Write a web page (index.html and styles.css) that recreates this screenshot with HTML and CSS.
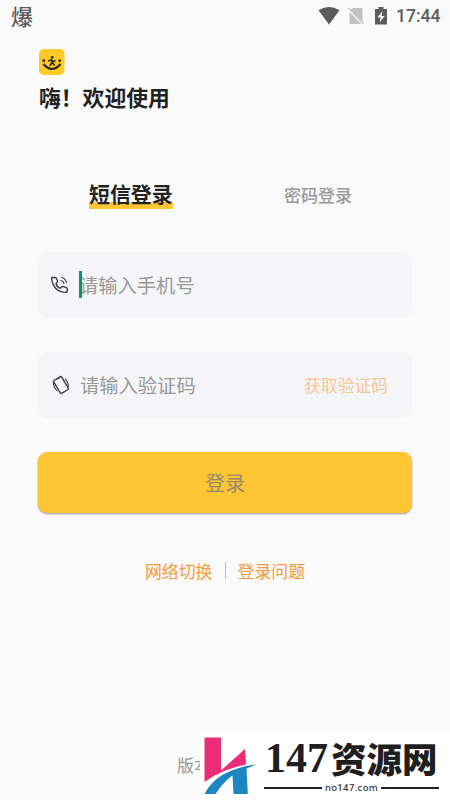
FILE: index.html
```html
<!DOCTYPE html>
<html lang="zh-CN">
<head>
<meta charset="utf-8">
<title>登录</title>
<link rel="stylesheet" href="styles.css">
</head>
<body>
<div class="screen">
  <header class="status">
    <span class="carrier">爆</span>
    <svg class="status-icons" width="76" height="22" viewBox="0 0 76 22">
      <path fill="#5c5c5c" d="M0.5 5.200Q11 -1.200 21.500 5.200L11 19.500Z"/>
      <path fill="#c2c2c2" d="M35 3H44.500V16.500L32.500 4.500ZM31.500 7L43.500 19H31.500Z"/>
      <path d="M30.500 3L45.500 18.500" stroke="#c2c2c2" stroke-width="1.300"/>
      <path fill="#5c5c5c" d="M60.500 2H65.500V4H69V19.500H57V4H60.500Z"/>
      <path fill="#fafafa" d="M64.500 6L59.500 12.500H62.600L61.600 17.500L66.600 11H63.500Z"/>
    </svg>
    <span class="clock">17:44</span>
  </header>
  <main class="content">
    <svg class="logo" width="26" height="26" viewBox="0 0 26 26">
      <rect width="25.500" height="26" rx="5" fill="#fdca27"/>
      <path d="M4.500 15Q13 25 21.500 15" fill="none" stroke="#292005" stroke-width="2"/>
      <path d="M3.500 10.500h2.500v2.300H3.500zM19.500 10.500h2.500v2.300H19.500z" fill="#292005"/>
      <circle cx="13.200" cy="8.300" r="1.300" fill="#292005"/>
      <path d="M9.300 12L12.500 10.800L13.200 13L16.500 11.500M13 10.500V13.500L10.800 17M13.200 13.500L15.800 16.500" fill="none" stroke="#292005" stroke-width="1.500"/>
    </svg>
    <h1 class="greeting">嗨！欢迎使用</h1>
    <nav class="tabs">
      <span class="tab tab-active">短信登录</span>
      <span class="tab">密码登录</span>
    </nav>
    <div class="field">
      <svg class="field-icon" width="20" height="20" viewBox="0 0 20 20" fill="none" stroke="#3e4043" stroke-width="1.400" stroke-linejoin="round" stroke-linecap="round">
        <path d="M2.200 2.500H5.300Q6 2.500 6.300 3.200L7.500 6.100Q7.700 6.800 7.200 7.300L6 8.500Q6.600 11.800 10.200 13.300L11.700 11.700Q12.200 11.300 12.900 11.500L16.500 12.600Q17.200 12.900 17.200 13.600V16.100Q17.200 17.500 15.800 17.400Q3.500 16.800 1.700 3.800Q1.500 2.600 2.200 2.500Z"/>
        <path d="M10.800 5.200Q13.300 5.900 14 8.500M11.500 2.200Q15.600 3.300 16.600 7.700" stroke-width="1.100"/>
      </svg>
      <span class="placeholder focused">请输入手机号</span>
    </div>
    <div class="field">
      <svg class="field-icon" width="20" height="20" viewBox="0 0 20 20" fill="none" stroke="#3e4043" stroke-linecap="round">
        <rect x="6.300" y="2.500" width="9.400" height="15" rx="1.400" stroke-width="1.400" transform="rotate(-31 11 10)"/>
        <path d="M7.700 4.200L9.500 3.100" stroke-width="1"/>
        <path d="M3.300 7Q3.200 11.700 6.700 15.500M15.300 4.200Q18.800 7.800 18.200 12.300" stroke-width="1.100"/>
      </svg>
      <span class="placeholder">请输入验证码</span>
      <span class="get-code">获取验证码</span>
    </div>
    <div class="submit">登录</div>
    <div class="links"><span>网络切换</span><i class="divider"></i><span>登录问题</span></div>
  </main>
  <footer class="version">版本</footer>
  <div class="badge">
    <svg class="badge-logo" width="54" height="60" viewBox="0 0 54 60">
      <path fill="#eb2c78" d="M0.500 1.500H17V34.500L41 13L42 28.500Q18 33 0.500 46Z"/>
      <path fill="#1d87c4" d="M0.500 58Q12 34 52 28.200Q47 31 42.500 32.500L43.800 58H29.500L28.500 39.500Q19 46 11.500 58Z"/>
    </svg>
    <div class="badge-text">
      <div class="badge-name"><span class="badge-num">147</span><span class="badge-cn">资源网</span></div>
      <div class="badge-domain">no147.com</div>
    </div>
  </div>
</div>
</body>
</html>
```
FILE: styles.css
```css
* { box-sizing: border-box; }
body { margin: 0; background: #fafafa; font-family: "Noto Sans CJK SC", sans-serif; }
.screen { position: relative; height: 800px; overflow: hidden; display: flex; flex-direction: column; color: #222; }
.status { height: 32px; display: flex; align-items: center; padding: 0 10px 0 11px; color: #5c5c5c; }
.carrier { flex: 1; font-size: 22px; font-weight: 500; line-height: 30px; margin-top: -3px; }
.status-icons { margin-right: 2px; }
.clock { width: 44px; font: 500 17.500px/24px Roboto, sans-serif; white-space: nowrap; }
.content { padding: 17px 38px 0; display: flex; flex-direction: column; }
.logo { margin-left: 1px; }
.greeting { margin: 6px 0 0 1px; font-size: 21.800px; line-height: 32px; font-weight: 600; }
.tabs { margin-top: 60px; height: 49px; padding: 0 60px 0 51px; display: flex; justify-content: space-between; align-items: flex-start; }
.tab { margin-top: 7px; font-size: 17px; line-height: 30px; color: #999; font-weight: 500; }
.tab-active { height: 33px; margin-top: 5px; font-size: 20.900px; font-weight: 600; color: #222; background: linear-gradient(#ffc533, #ffc533) 0 24px / 100% 7px no-repeat; }
.field { height: 66px; margin-bottom: 34px; padding: 0 24px 0 12px; border-radius: 9px; background: #f3f5f7; display: flex; align-items: center; }
.tabs + .field { margin-top: 30px; }
.field-icon { flex: none; }
.placeholder { position: relative; flex: 1; margin-left: 10px; font-size: 19.300px; line-height: 28px; color: #999; }
.focused { margin-left: 9px; }
.focused::before { content: ""; position: absolute; left: 0; top: 0; width: 2.500px; height: 27px; background: #0b9275; }
.get-code { font-size: 16.800px; color: #f7c798; }
.submit { height: 61px; border-radius: 9px; background: #ffc533; color: #94896f; font-size: 20px; line-height: 61px; text-align: center; box-shadow: 0 1px 2px rgba(0,0,0,.4); }
.links { height: 26px; margin-top: 44px; display: flex; align-items: center; justify-content: center; font-size: 16.900px; color: #f59a3d; }
.divider { width: 1px; height: 17px; background: #bbb; margin: 0 12px; }
.version { margin: auto 0 21px 177px; font-size: 17px; line-height: 28px; color: #999; }
.badge { position: absolute; left: 200px; top: 732px; width: 250px; height: 68px; background: #fff; display: flex; padding: 4px 11px 0 4px; }
.badge-logo { flex: none; }
.badge-text { width: 175px; margin-left: 6px; }
.badge-name { display: flex; align-items: center; height: 44px; color: #1f1f1f; }
.badge-num { width: 67px; padding-left: 1px; font: bold 42px/42px "Liberation Serif", serif; }
.badge-cn { width: 108px; font-size: 35.500px; line-height: 36px; font-weight: 900; white-space: nowrap; }
.badge-domain { display: flex; align-items: center; gap: 3px; height: 15px; font: 500 9.500px/12px "Noto Sans", sans-serif; letter-spacing: .35px; color: #333; }
.badge-domain::before, .badge-domain::after { content: ""; flex: 1; height: 2px; background: #222; }
```
